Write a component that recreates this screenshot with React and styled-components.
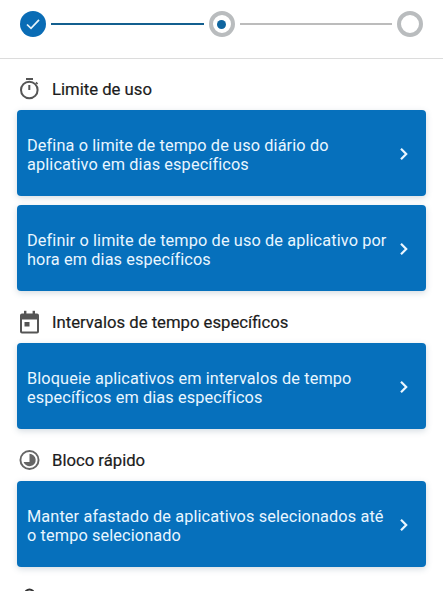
import React from "react";
import styled, { createGlobalStyle } from "styled-components";

const Global = createGlobalStyle`
  html, body {
    margin: 0;
    padding: 0;
    background: #fff;
  }
  body {
    width: 443px;
    height: 591px;
    overflow: hidden;
    font-family: Roboto, "Liberation Sans", sans-serif;
  }
`;

const Page = styled.div`
  width: 443px;
  height: 591px;
  overflow: hidden;
`;

const Stepper = styled.div`
  height: 59px;
  box-sizing: border-box;
  padding: 11px 20px 0 20px;
  display: flex;
  align-items: flex-start;
  border-bottom: 1.5px solid #dcdcdc;
`;

const StepDone = styled.div`
  width: 26px;
  height: 26px;
  border-radius: 50%;
  background: #0a6cb5;
  display: flex;
  align-items: center;
  justify-content: center;
  flex: none;
`;

const StepRing = styled.div`
  width: 26px;
  height: 26px;
  box-sizing: border-box;
  border-radius: 50%;
  border: 4px solid #b9bcbe;
  display: flex;
  align-items: center;
  justify-content: center;
  flex: none;
`;

const StepDot = styled.div`
  width: 9px;
  height: 9px;
  border-radius: 50%;
  background: #0f659f;
`;

const StepLine = styled.div`
  flex: 1;
  height: 2px;
  margin: 12px 5px 0;
  background: ${(p) => (p.$done ? "#135f8f" : "#bcbcbc")};
`;

const Content = styled.div`
  padding: 17px 17px 0;
  display: flex;
  flex-direction: column;
`;

const Heading = styled.div`
  display: flex;
  align-items: center;
  gap: 12px;
  height: 26px;
  padding-left: 2px;
  margin-top: ${(p) => p.$gap || 0}px;
  font-size: 16.7px;
  font-weight: 400;
  -webkit-text-stroke: 0.2px #1c1c1c;
  color: #1c1c1c;
`;

const FadedLabel = styled.span`
  opacity: 0.3;
  filter: blur(0.6px);
`;

const IconBox = styled.span`
  width: 21px;
  height: 24px;
  display: flex;
  align-items: center;
  justify-content: center;
  flex: none;
`;

const Card = styled.div`
  height: 86px;
  box-sizing: border-box;
  margin-top: ${(p) => p.$gap}px;
  padding: 2px 17px 0 10px;
  background: #0670bc;
  border-radius: 4px;
  box-shadow: 0 2px 6px rgba(60, 90, 120, 0.22);
  display: flex;
  align-items: center;
  justify-content: space-between;
  color: #e9f6ff;
  font-size: 16.3px;
  line-height: 19.5px;
  letter-spacing: 0.12px;
`;

const CardText = styled.div`
  width: 362px;
  padding-top: 2px;
`;

const Check = () => (
  <svg width="16" height="16" viewBox="0 0 16 16" fill="none">
    <path d="M2 8.5 6 12.4 14 3.8" stroke="#e8f4fb" strokeWidth="1.7" />
  </svg>
);

const Chevron = () => (
  <svg width="10" height="14" viewBox="0 0 10 14" fill="none">
    <path d="M2 1.8 7.2 7 2 12.2" stroke="#eaf6ff" strokeWidth="2.2" />
  </svg>
);

const Stopwatch = () => (
  <svg width="21" height="24" viewBox="0 0 21 24" fill="none" stroke="#555">
    <path d="M7 2h7" strokeWidth="2" />
    <circle cx="10.3" cy="13" r="8.3" strokeWidth="2" />
    <path d="M10.3 8v5" strokeWidth="2" />
    <path d="M17 5.4l1.6 1.6" strokeWidth="1.6" />
  </svg>
);

const Calendar = () => (
  <svg width="21" height="24" viewBox="0 0 21 24" fill="none">
    <path
      d="M3 3.5h15a2 2 0 0 1 2 2v16a2 2 0 0 1-2 2H3a2 2 0 0 1-2-2v-16a2 2 0 0 1 2-2Z"
      fill="#555"
    />
    <rect x="3" y="9.5" width="15" height="12" fill="#fff" />
    <rect x="5" y="0.8" width="2.4" height="4" fill="#555" />
    <rect x="13.6" y="0.8" width="2.4" height="4" fill="#555" />
    <rect x="5.5" y="12" width="5" height="4.5" fill="#555" />
  </svg>
);

const Clock = () => (
  <svg width="22" height="22" viewBox="0 0 22 22" fill="none">
    <circle cx="11" cy="11" r="9.5" stroke="#666" strokeWidth="2" />
    <path d="M11 4.5a6.5 6.5 0 1 1-6.2 8.5H11Z" fill="#666" />
  </svg>
);

const Pin = () => (
  <svg width="21" height="24" viewBox="0 0 21 24" fill="none" stroke="#333">
    <circle cx="10.5" cy="8" r="4.5" strokeWidth="2" />
    <path d="M4 22c1-5 12-5 13 0" strokeWidth="2" />
  </svg>
);

export default function App() {
  return (
    <Page>
      <Global />
      <Stepper>
        <StepDone>
          <Check />
        </StepDone>
        <StepLine $done />
        <StepRing>
          <StepDot />
        </StepRing>
        <StepLine />
        <StepRing />
      </Stepper>
      <Content>
        <Heading>
          <IconBox>
            <Stopwatch />
          </IconBox>
          Limite de uso
        </Heading>
        <Card $gap={8}>
          <CardText>Defina o limite de tempo de uso diário do aplicativo em dias específicos</CardText>
          <Chevron />
        </Card>
        <Card $gap={9}>
          <CardText>Definir o limite de tempo de uso de aplicativo por hora em dias específicos</CardText>
          <Chevron />
        </Card>
        <Heading $gap={18}>
          <IconBox>
            <Calendar />
          </IconBox>
          Intervalos de tempo específicos
        </Heading>
        <Card $gap={8}>
          <CardText>Bloqueie aplicativos em intervalos de tempo específicos em dias específicos</CardText>
          <Chevron />
        </Card>
        <Heading $gap={18}>
          <IconBox>
            <Clock />
          </IconBox>
          Bloco rápido
        </Heading>
        <Card $gap={8}>
          <CardText>Manter afastado de aplicativos selecionados até o tempo selecionado</CardText>
          <Chevron />
        </Card>
        <Heading $gap={18}>
          <IconBox>
            <Pin />
          </IconBox>
          <FadedLabel>Bloco por local</FadedLabel>
        </Heading>
      </Content>
    </Page>
  );
}
